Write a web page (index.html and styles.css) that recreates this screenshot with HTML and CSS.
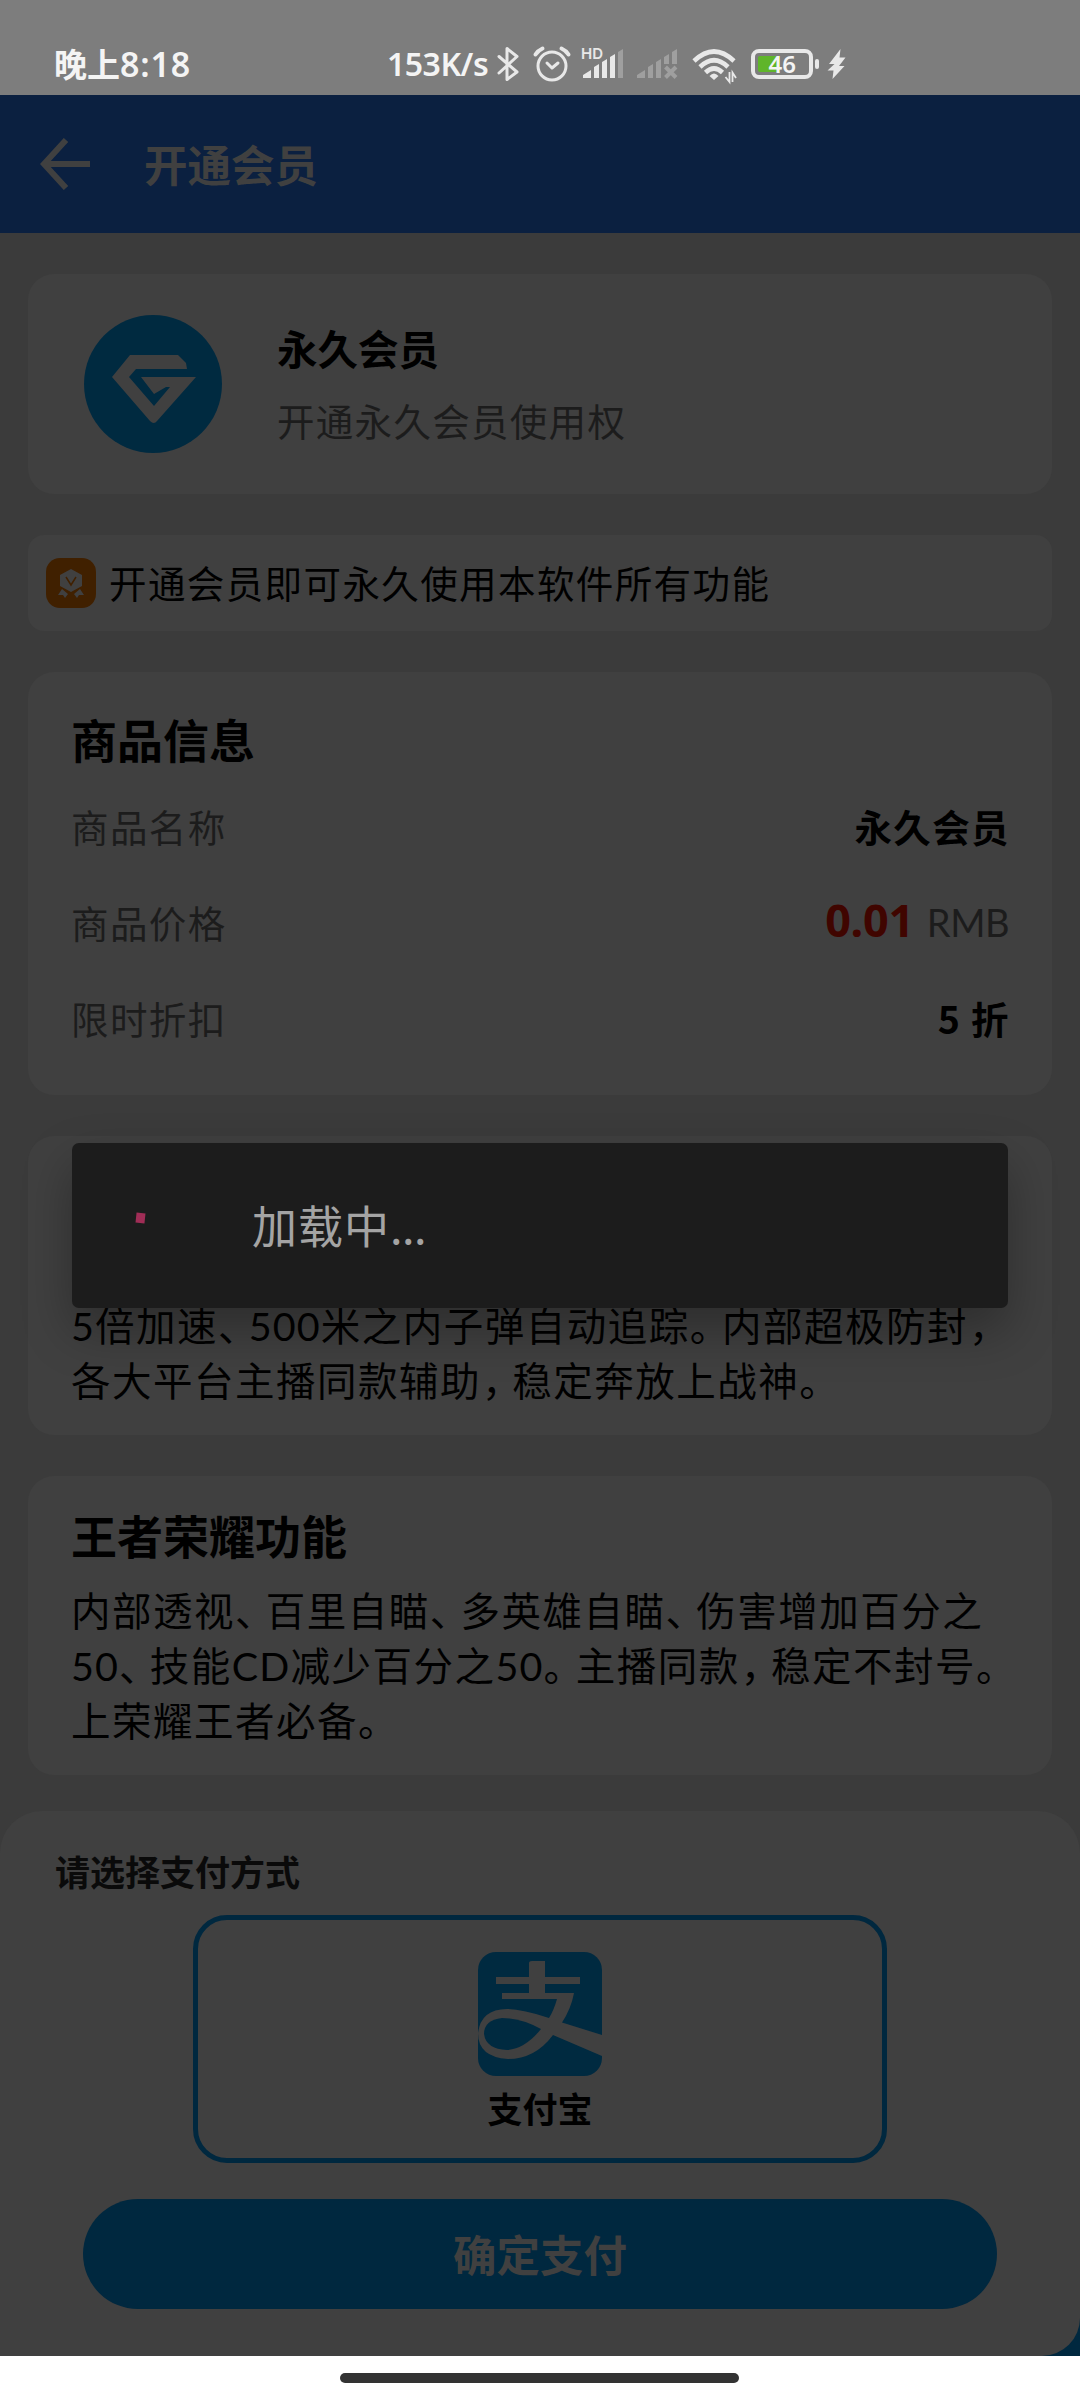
FILE: index.html
```html
<!DOCTYPE html>
<html lang="zh-CN">
<head>
<meta charset="utf-8">
<title>开通会员</title>
<link rel="stylesheet" href="styles.css">
</head>
<body>
<div class="screen">
  <div class="status">
    <span class="clock">晚上<b>8:18</b></span>
    <span class="speed">153K/s</span>
    <svg class="indicators" width="360" height="40" viewBox="490 45 360 40">
      <g fill="none" stroke="#e8e8e8" stroke-width="3" stroke-linecap="round" stroke-linejoin="round">
        <path d="M499 56.500L517 72L507 79.500V48.500L517 56.500L499 73"/>
        <circle cx="552" cy="66" r="14"/>
        <path d="M547 63L552 68L558 63"/>
        <path d="M535.500 54.500Q538 50.500 542.500 48.500M561.500 48.500Q566 50.500 568.500 54.500" stroke-width="4"/>
      </g>
      <text class="hd" x="581" y="59">HD</text>
      <g fill="#e8e8e8">
        <path d="M583 75L591 70V78H583ZM594 67L599 64V78H594ZM602 62L607 59V78H602ZM610 57L615 54V78H610Z"/>
        <path fill="#9f9f9f" d="M618 52L623 49V78H618Z"/>
        <path fill="#9f9f9f" d="M637 75L645 70V78H637ZM648 67L653 64V78H648ZM656 62L661 59V78H656ZM664 57L669 54V64H664ZM672 52L677 49V64H672Z"/>
      </g>
      <path d="M665.500 67L676 77.500M676 67L665.500 77.500" stroke="#9f9f9f" stroke-width="4" fill="none"/>
      <g fill="none" stroke="#e8e8e8" stroke-width="4.6">
        <path d="M694 61Q714 42 734 61M700 67Q714 53.500 728 67M705.500 72.500Q714 64.500 722.500 72.500"/>
        <path d="M709.500 76Q714 71 718.500 76L714 80Z" fill="#e8e8e8" stroke="none"/>
        <path d="M729.500 72V82L725.500 77M732.500 82V72.500L736 78" stroke-width="1.800"/>
      </g>
      <rect x="753" y="51" width="58" height="26" rx="6" fill="none" stroke="#e8e8e8" stroke-width="4"/>
      <path d="M760 56H780V72H760Q758 72 758 70V58Q758 56 760 56Z" fill="#5fb52a"/>
      <rect x="815" y="59" width="4" height="10" rx="2" fill="#e8e8e8"/>
      <text class="level" x="768.500" y="73">46</text>
      <path d="M840.500 49L829 64H834.500L827.500 70.500H833.500L832.500 79L844.500 66H839L845.500 57.500H839.500Z" fill="#e8e8e8"/>
    </svg>
  </div>
  <div class="header">
    <svg width="50" height="52" viewBox="0 0 50 52"><path d="M26 2L4 26L26 50M4 26H50" fill="none" stroke="#404040" stroke-width="6"/></svg>
    <h1>开通会员</h1>
  </div>
  <div class="content">
    <section class="card member">
      <svg class="logo" width="138" height="138" viewBox="0 0 138 138">
        <circle cx="69" cy="69" r="69" fill="#002a40"/>
        <path d="M46 40H94L102 48L103 54H52L45 62L70 91L86 72L82 72L70 79L57 62H112L73 106Q70 110 66 106L28 62Z" fill="#404040"/>
      </svg>
      <div>
        <h2>永久会员</h2>
        <p>开通永久会员使用权</p>
      </div>
    </section>
    <section class="card notice">
      <svg width="50" height="50" viewBox="0 0 50 50">
        <rect width="50" height="50" rx="14" fill="#402000"/>
        <path d="M25 11L36 17V28L25 34L14 28V17ZM16 31L22 36L19 40L17 37L12 37ZM34 31L28 36L31 40L33 37L38 37Z" fill="#404040"/>
        <path d="M20 19L25 27L30 19" fill="none" stroke="#402000" stroke-width="1.500"/>
      </svg>
      <span>开通会员即可永久使用本软件所有功能</span>
    </section>
    <section class="card product">
      <h3>商品信息</h3>
      <div class="row"><span>商品名称</span><b>永久会员</b></div>
      <div class="row"><span>商品价格</span><span class="value"><b class="price">0.01</b><span class="unit">RMB</span></span></div>
      <div class="row"><span>限时折扣</span><b>5 折</b></div>
    </section>
    <section class="card feature first">
      <p><span class="n">5</span>倍加速<i>、</i><span class="n">500</span>米之内子弹自动追踪<i class="stop">。</i>内部超极防封<i class="comma">，</i></p>
      <p>各大平台主播同款辅助<i class="comma">，</i>稳定奔放上战神<i class="stop">。</i></p>
    </section>
    <section class="card feature">
      <h3>王者荣耀功能</h3>
      <p>内部透视<i>、</i>百里自瞄<i>、</i>多英雄自瞄<i>、</i>伤害增加百分之</p>
      <p><span class="n">50</span><i>、</i>技能<span class="n">CD</span>减少百分之<span class="n">50</span><i class="stop">。</i>主播同款<i class="comma">，</i>稳定不封号<i class="stop">。</i></p>
      <p>上荣耀王者必备<i class="stop">。</i></p>
    </section>
  </div>
  <div class="sheet-wrap">
    <div class="sheet">
      <div class="choose">请选择支付方式</div>
      <div class="method">
        <svg width="124" height="124" viewBox="0 0 124 124">
          <rect width="124" height="124" rx="18" fill="#002a40"/>
          <path d="M51 11Q51 9 54 9H67V25H102V32H67V41H96Q93 57 84 70.500L124 83V104L75 83Q57 107 30 107Q0 105 0 81Q3 57 29 57Q44 57 71 66Q76 58 79 47H24V41H51V32H18V25H51Z" fill="#404040"/>
          <path d="M63 77Q43 66 24 66Q6 68 6 82Q8 97 29 98Q47 97 63 77Z" fill="#002a40"/>
        </svg>
        <span>支付宝</span>
      </div>
      <div class="pay">确定支付</div>
    </div>
  </div>
  <div class="nav"><div class="handle"></div></div>
  <div class="dialog"><div class="spinner"></div><span>加载中<em>...</em></span></div>
</div>
</body>
</html>
```
FILE: styles.css
```css
* { box-sizing: border-box; margin: 0; padding: 0; }
body { width: 1080px; font-family: "Noto Sans CJK SC", sans-serif; color: #000; background: #fff; }
svg { display: block; flex: none; }
.screen { position: relative; width: 1080px; height: 2400px; display: flex; flex-direction: column; overflow: hidden; background: #3b3b3b; }
.status { height: 95px; background: #7d7d7d; display: flex; align-items: flex-start; padding: 45px 0 0 54px; color: #f4f4f4; }
.clock, .speed { font-size: 33px; font-weight: 700; line-height: 36px; white-space: nowrap; }
.clock { width: 333px; }
.clock b { font: 600 34px/36px "Noto Sans", sans-serif; letter-spacing: .8px; }
.speed { width: 103px; font: 600 32px/38px "Noto Sans", sans-serif; letter-spacing: -.5px; }
.hd { font: 600 15px Inter, sans-serif; fill: #e8e8e8; }
.level { font: 600 24px "Noto Sans", sans-serif; fill: #f4f4f4; }
.header { height: 138px; background: #0b2040; display: flex; align-items: center; gap: 54px; padding: 0 0 0 40px; color: #404040; }
.header h1 { font-size: 43.500px; line-height: 60px; font-weight: 700; }
.content { padding: 41px 28px 0; display: flex; flex-direction: column; gap: 41px; height: 1578px; }
.card { background: #404040; border-radius: 26px; flex: none; }
.member { height: 220px; display: flex; align-items: center; gap: 55px; padding-left: 56px; }
.member div { margin-top: -2px; }
.member h2 { font-size: 40.500px; line-height: 60px; font-weight: 700; }
.member p { font-size: 37.500px; letter-spacing: 1.300px; line-height: 56px; margin-top: 14px; color: #1c1c1c; }
.notice { height: 96px; border-radius: 16px; display: flex; align-items: center; gap: 13px; padding-left: 18px; font-size: 37.500px; letter-spacing: 1.400px; }
.notice span { margin-top: -3px; }
.product { height: 423px; padding: 33px 43px 0 43px; }
h3 { font-size: 46px; line-height: 66px; font-weight: 700; }
.row { height: 96px; display: flex; align-items: center; justify-content: space-between; font-size: 37.500px; letter-spacing: 1.400px; color: #1c1c1c; }
.product h3 { margin-bottom: 14px; height: 58px; }
.row b { color: #000; font-weight: 700; margin-right: -1px; }
.value { display: flex; align-items: baseline; gap: 14px; }
.row .price { font: 700 45px/60px "Noto Sans", sans-serif; color: #400500; letter-spacing: -.3px; }
.unit { font: 400 38px/60px Lato, sans-serif; letter-spacing: -.5px; }
.feature { height: 299px; padding: 25px 0 0 43px; }
.feature p { height: 55px; font-size: 39.500px; letter-spacing: 1.500px; line-height: 55px; white-space: nowrap; }
.feature h3 { margin-bottom: 14px; }
.feature.first { padding-top: 160px; }
.feature i { font-style: normal; font-feature-settings: "halt"; letter-spacing: 11px; }
.feature .stop { letter-spacing: 12.500px; }
.feature .comma { padding-left: 1px; letter-spacing: 10.500px; }
.n { font-family: Lato, sans-serif; letter-spacing: 1.100px; line-height: 1; }
.sheet-wrap { height: 545px; background: linear-gradient(#3b3b3b 50%, #00283f 50%); }
.sheet { height: 545px; background: #404040; border-radius: 42px 42px 38px 0; display: flex; flex-direction: column; align-items: center; }
.choose { align-self: flex-start; margin: 34px 0 1px 55px; font-size: 35px; line-height: 52px; font-weight: 700; color: #0a0a0a; }
.method { width: 694px; height: 248px; margin-top: 17px; border: 5px solid #00283f; border-radius: 34px; display: flex; flex-direction: column; align-items: center; padding-top: 32px; font-size: 35px; line-height: 52px; font-weight: 700; }
.method span { margin-top: 6px; }
.pay { width: 914px; height: 110px; margin-top: 36px; border-radius: 55px; background: #00283f; color: #404040; font-size: 43.500px; line-height: 109px; font-weight: 700; text-align: center; }
.nav { height: 44px; background: #fff; padding-top: 17px; }
.handle { width: 399px; height: 10px; margin-left: 340px; border-radius: 5px; background: #333; }
.dialog { position: absolute; left: 72px; top: 1143px; width: 936px; height: 165px; border-radius: 7px; background: #1c1c1c; box-shadow: 0 22px 50px rgba(0, 0, 0, .3); display: flex; align-items: center; padding-left: 64px; gap: 107px; color: #a4a4a4; font-size: 45px; letter-spacing: 1px; }
.dialog span { margin-top: -2px; }
.spinner { width: 9px; height: 10px; margin-top: -15px; background: #a02d56; transform: rotate(6deg); }
.dialog em { font-style: normal; letter-spacing: -.5px; }
```
